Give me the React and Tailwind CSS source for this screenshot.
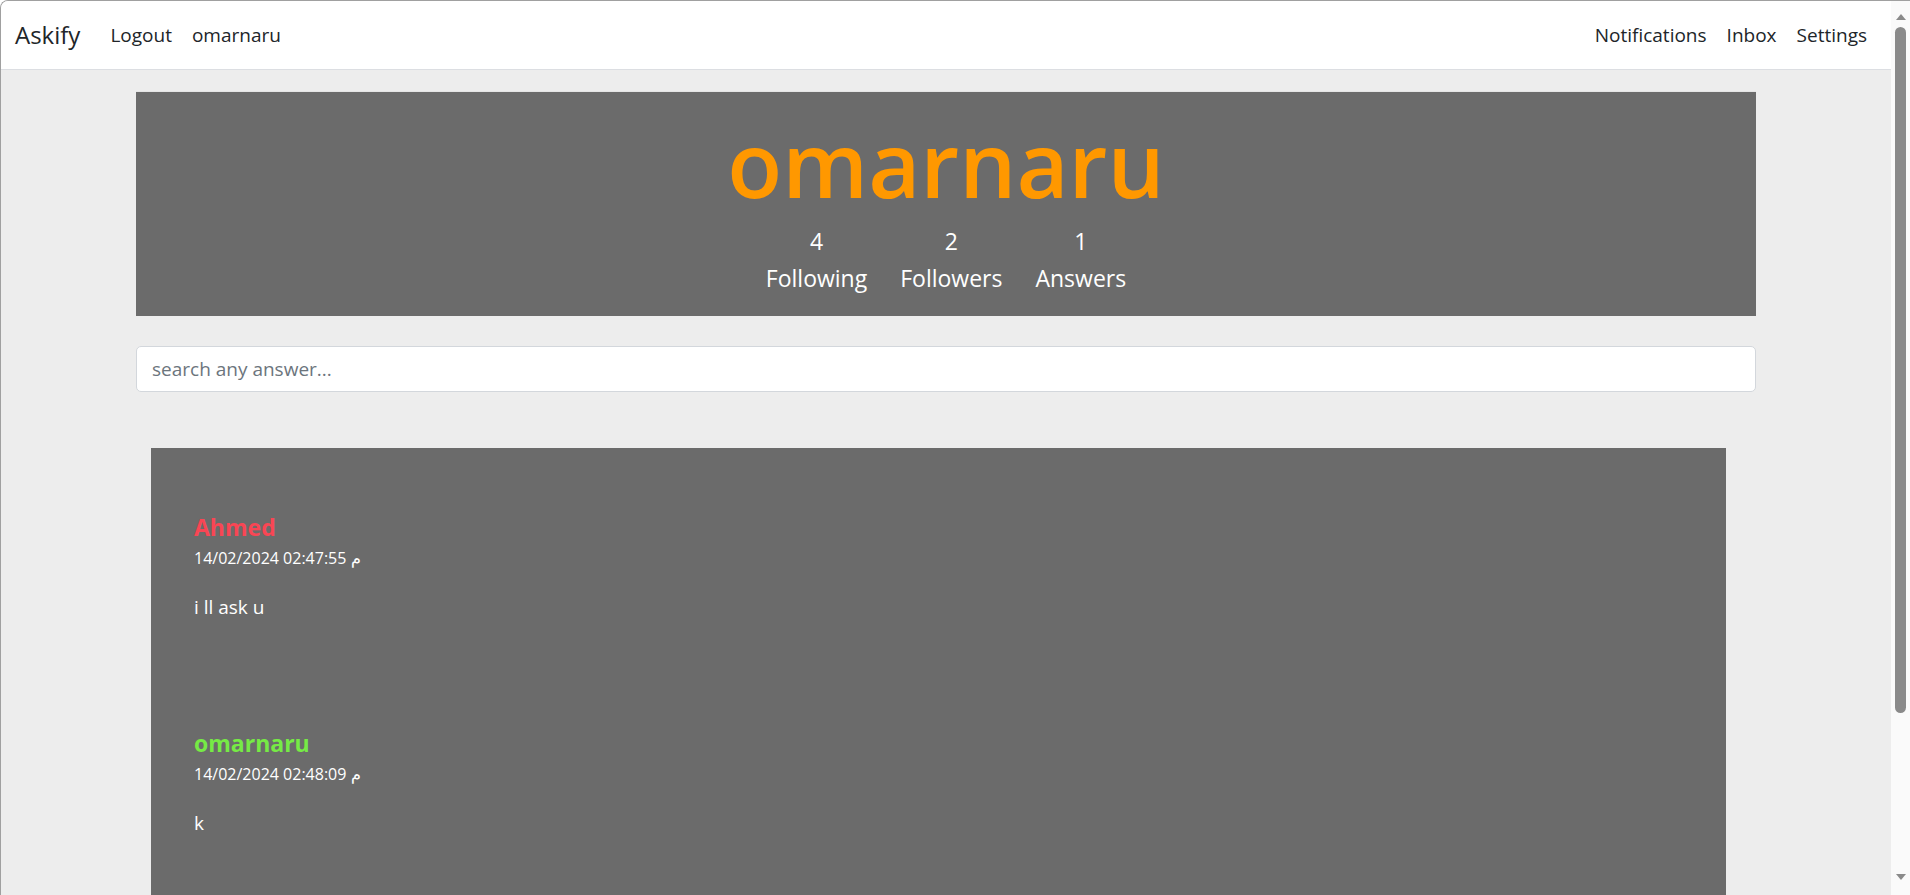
const answers = [
  {
    from: "Ahmed",
    color: "text-[#f94654]",
    date: "14/02/2024 02:47:55 م",
    text: "i ll ask u",
  },
  {
    from: "omarnaru",
    color: "text-[#76ea45]",
    date: "14/02/2024 02:48:09 م",
    text: "k",
  },
];

const stats = [
  { n: 4, label: "Following" },
  { n: 2, label: "Followers" },
  { n: 1, label: "Answers" },
];

function Scrollbar() {
  return (
    <div className="flex w-[19px] shrink-0 flex-col items-center bg-[#fafafa]">
      <svg width="12" height="8" viewBox="0 0 12 8" className="mt-[12px]">
        <path d="M6 1 L11 7 L1 7 Z" fill="#8a8a8a" />
      </svg>
      <div className="mt-[6px] h-[686px] w-[11px] rounded-full bg-[#8a8a8a]" />
      <div className="flex-1" />
      <svg width="12" height="8" viewBox="0 0 12 8" className="mb-[14px]">
        <path d="M1 1 L11 1 L6 7 Z" fill="#8a8a8a" />
      </svg>
    </div>
  );
}

export default function App() {
  return (
    <div
      className="flex h-[895px] w-full overflow-hidden rounded-tl-lg border-l border-t border-[#a0a0a0] bg-[#ededed] text-[#212529]"
      style={{ fontFamily: '"Open Sans", "Noto Sans", sans-serif' }}
    >
      <div className="flex min-w-0 flex-1 flex-col overflow-hidden">
        <nav className="flex h-[69px] shrink-0 items-center border-b border-[#dcdee2] bg-white px-[14px]">
          <a className="mr-[20px] text-[24px] leading-none">Askify</a>
          <a className="px-[10px] text-[19px]">Logout</a>
          <a className="px-[10px] text-[19px]">omarnaru</a>
          <div className="ml-auto flex">
            {["Notifications", "Inbox", "Settings"].map((l) => (
              <a key={l} className="px-[10px] text-[19px]">
                {l}
              </a>
            ))}
          </div>
        </nav>

        <div className="mx-auto w-[1650px] px-[15px]">
          <div className="mt-[21px] flex h-[225px] flex-col items-center border-t border-[#e5e5e5] bg-[#6b6b6b] pt-[11px]">
            <h1 className="text-[90px] font-semibold leading-[120px] text-[#ff9800]">
              omarnaru
            </h1>
            <div className="flex gap-[33px] text-[23px] leading-[37px] text-white">
              {stats.map((s) => (
                <div key={s.label} className="flex flex-col items-center">
                  <span>{s.n}</span>
                  <span>{s.label}</span>
                </div>
              ))}
            </div>
          </div>

          <input
            type="text"
            placeholder="search any answer..."
            className="mt-[30px] h-[46px] w-full rounded-[5px] border border-[#d3d7dc] bg-white px-[15px] text-[19px] outline-none placeholder:text-[#6c757d]"
          />

          <div className="mb-10 ml-[15px] mr-[30px] mt-[56px] h-[600px] bg-[#6b6b6b] px-[43px] pt-[64px]">
            {answers.map((a, i) => (
              <div key={i} className={i > 0 ? "mt-[106px]" : ""}>
                <div className={`text-[23px] font-bold leading-[30px] ${a.color}`}>
                  {a.from}
                </div>
                <div className="mt-[3px] text-[16px] leading-[26px] text-white">
                  {a.date}
                </div>
                <p className="mt-[21px] text-[19px] leading-[30px] text-white">
                  {a.text}
                </p>
              </div>
            ))}
          </div>
        </div>
      </div>
      <Scrollbar />
    </div>
  );
}
